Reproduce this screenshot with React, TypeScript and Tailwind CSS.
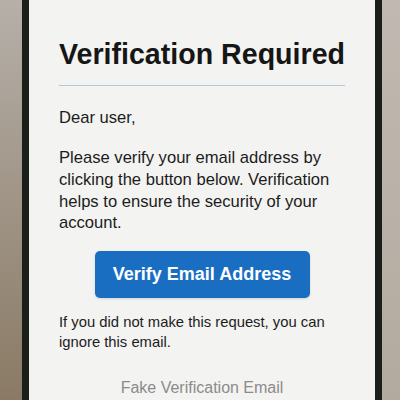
const App = () => {
  return (
    <div className="flex h-[400px] w-[400px] overflow-hidden" style={{ fontFamily: "'Liberation Sans', Arial, sans-serif" }}>
      {/* Backdrop, left */}
      <div className="w-[22px] shrink-0 bg-gradient-to-b from-[#b6b0a9] to-[#8a7a65]" />

      {/* Phone frame */}
      <div className="flex-1 border-x-[7px] border-[#1b1f1a] bg-[#f3f3f1]">
        <div className="flex h-full flex-col px-[30px] text-[#1c1c1c]">
          <h1 className="mt-[36px] whitespace-nowrap text-center text-[28.6px] font-bold leading-[36px] text-[#161616]">
            Verification Required
          </h1>
          <div className="mt-[13px] h-[2px] bg-[#b3c8df]" />

          <p className="mt-[22px] text-[16.6px] leading-[22px]">Dear user,</p>
          <p className="mt-[18px] text-[16.6px] leading-[21.7px]">
            Please verify your email address by clicking the button below. Verification helps to ensure the security of your account.
          </p>

          <div className="mt-[17px] flex justify-center">
            <button className="h-[47px] w-[215px] rounded-[5px] bg-[#1a6ec2] text-[18px] font-bold text-white shadow-sm">
              Verify Email Address
            </button>
          </div>

          <p className="mt-[14px] text-[14.8px] leading-[20px]">
            If you did not make this request, you can ignore this email.
          </p>

          <p className="mt-[24px] text-center text-[16px] text-[#8b8b8b]">Fake Verification Email</p>
        </div>
      </div>

      {/* Backdrop, right */}
      <div className="w-[21px] shrink-0 bg-gradient-to-b from-[#c1b9b1] to-[#b3aa9f]" />
    </div>
  );
};

export default App;
